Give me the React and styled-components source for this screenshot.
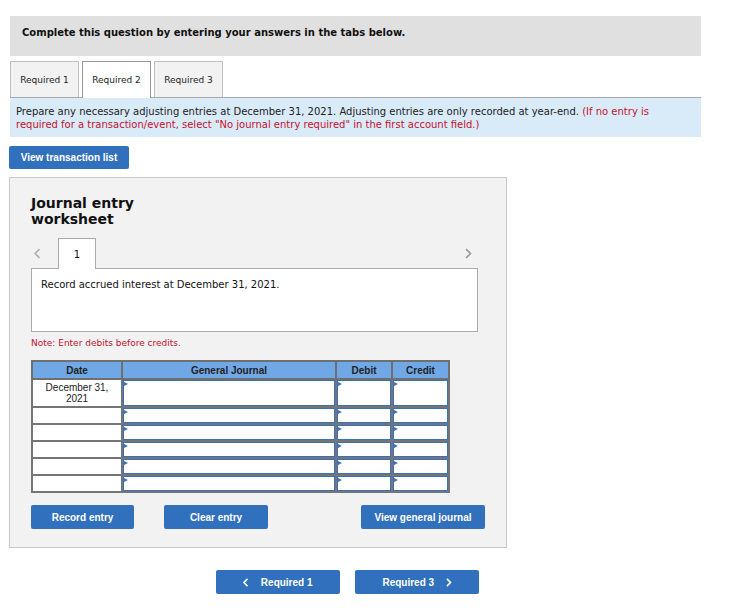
import React from 'react';
import styled, { createGlobalStyle } from 'styled-components';

const GlobalStyle = createGlobalStyle`
body {
  margin: 0;
  background: #ffffff;
  font-family: "DejaVu Sans", Verdana, sans-serif;
  color: #111;
}
`;

const rows = [
    { date: 'December 31,\n2021', tall: true },
    { date: '' },
    { date: '' },
    { date: '' },
    { date: '' },
    { date: '' },
];

const Chevron = ({ dir = 'left', color = '#aaa', size = 10, width = 1.5 }) => (
    <svg width={size * 0.6} height={size} viewBox="0 0 6 10" fill="none">
        {dir === 'left'
            ? <polyline points="5,1 1,5 5,9" stroke={color} strokeWidth={width} fill="none"/>
            : <polyline points="1,1 5,5 1,9" stroke={color} strokeWidth={width} fill="none"/>}
    </svg>
);

const Page = styled.div`
width: 691px;
padding: 16px 0 0 10px;
`;

const Header = styled.div`
height: 40px;
box-sizing: border-box;
background: #e0e0e0;
padding: 11px 0 0 12px;
font-size: 10px;
line-height: 12px;
font-weight: bold;
color: #111;
`;

const TabRow = styled.div`
display: flex;
gap: 3px;
margin-top: 5px;
position: relative;
z-index: 1;
`;

const Tab = styled.div`
width: 67px;
height: ${p => p.$active ? 36 : 35}px;
margin-bottom: ${p => p.$active ? -1 : 0}px;
border: 1px solid ${p => p.$active ? '#999' : '#c0c0c0'};
border-bottom: none;
background: ${p => p.$active ? '#ffffff' : '#f2f2f2'};
display: flex;
align-items: center;
justify-content: center;
font-size: 9px;
color: #222;
`;

const Instructions = styled.div`
background: #d9ebf9;
border-top: 1px solid #a8a8a8;
padding: 7px 38px 6px 6px;
font-size: 10px;
line-height: 13px;
color: #222;
`;

const Lead = styled.span`
color: #222;
`;

const Red = styled.span`
color: #c8102e;
`;

const Button = styled.button`
width: ${p => p.$w}px;
height: 24px;
background: #3170bc;
border: none;
border-radius: 2px;
color: #fff;
font-family: "Liberation Sans", Arial, sans-serif;
font-weight: bold;
font-size: 10px;
display: flex;
align-items: center;
justify-content: center;
gap: 12px;
padding: 0;
cursor: pointer;
`;

const TransactionButton = styled(Button)`
margin: 9px 0 0 -1px;
height: 23px;
`;

const Panel = styled.div`
width: 454px;
margin: 8px 0 0 -1px;
padding: 17px 21px 18px 21px;
border: 1px solid #c8c8c8;
background: #f2f2f2;
`;

const Title = styled.div`
font-size: 14px;
font-weight: bold;
line-height: 16px;
color: #111;
`;

const EntryNav = styled.div`
display: flex;
align-items: flex-end;
margin-top: 10px;
width: 447px;
height: 31px;
position: relative;
z-index: 1;
`;

const NavArrow = styled.div`
width: 27px;
height: 30px;
display: flex;
align-items: center;
padding-left: ${p => p.$pad}px;
box-sizing: border-box;
`;

const EntryTab = styled.div`
width: 36px;
height: 30px;
margin-bottom: -1px;
border: 1px solid #aaa;
border-bottom: none;
background: #fff;
display: flex;
align-items: center;
justify-content: center;
font-size: 10px;
color: #111;
`;

const Spacer = styled.div`
flex: 1;
`;

const RecordBox = styled.div`
width: 427px;
height: 42px;
border: 1px solid #aaa;
background: #fff;
padding: 10px 9px;
font-size: 10px;
color: #111;
`;

const Note = styled.div`
margin-top: 6px;
font-size: 9px;
color: #c8102e;
`;

const Table = styled.table`
margin-top: 12px;
border-collapse: collapse;
font-family: "Liberation Sans", Arial, sans-serif;
font-size: 10px;
background: #fff;
`;

const Th = styled.th`
width: ${p => p.$w}px;
height: 16px;
padding: 0;
background: #70a8e6;
border: 2px solid #6f6f6f;
font-weight: bold;
color: #222;
`;

const Td = styled.td`
height: ${p => p.$tall ? 26 : 15}px;
padding: 0;
border: 2px solid #757575;
vertical-align: top;
text-align: center;
white-space: pre-line;
line-height: 11px;
color: #222;
`;

const DateText = styled.div`
padding-top: 2px;
`;

const InputCell = styled.div`
height: ${p => p.$tall ? 24 : 13}px;
border: 1px solid #3b70bb;
position: relative;
&::before {
  content: '';
  position: absolute;
  left: 0;
  top: 1px;
  border-left: 4px solid #3b70bb;
  border-top: 2.5px solid transparent;
  border-bottom: 2.5px solid transparent;
}
`;

const ActionRow = styled.div`
display: flex;
margin-top: 12px;
gap: 30px;
`;

const BottomNav = styled.div`
display: flex;
gap: 15px;
margin: 22px 0 0 206px;
`;

const App = () => (
    <Page>
        <GlobalStyle/>
        <Header>Complete this question by entering your answers in the tabs below.</Header>
        <TabRow>
            <Tab>Required 1</Tab>
            <Tab $active>Required 2</Tab>
            <Tab>Required 3</Tab>
        </TabRow>
        <Instructions>
            <Lead>Prepare any necessary adjusting entries at December 31, 2021. Adjusting entries are only recorded at year-end.</Lead>{' '}
            <Red>(If no entry is required for a transaction/event, select "No journal entry required" in the first account field.)</Red>
        </Instructions>
        <TransactionButton $w={120}>View transaction list</TransactionButton>
        <Panel>
            <Title>Journal entry<br/>worksheet</Title>
            <EntryNav>
                <NavArrow $pad={3}><Chevron dir="left" color="#b0b0b0" size={11}/></NavArrow>
                <EntryTab>1</EntryTab>
                <Spacer/>
                <NavArrow $pad={14}><Chevron dir="right" color="#999" size={11}/></NavArrow>
            </EntryNav>
            <RecordBox>Record accrued interest at December 31, 2021.</RecordBox>
            <Note>Note: Enter debits before credits.</Note>
            <Table>
                <thead>
                    <tr>
                        <Th $w={88}>Date</Th>
                        <Th $w={212}>General Journal</Th>
                        <Th $w={54}>Debit</Th>
                        <Th $w={55}>Credit</Th>
                    </tr>
                </thead>
                <tbody>
                    {rows.map((r, i) => (
                        <tr key={i}>
                            <Td $tall={r.tall}><DateText>{r.date}</DateText></Td>
                            <Td $tall={r.tall}><InputCell $tall={r.tall}/></Td>
                            <Td $tall={r.tall}><InputCell $tall={r.tall}/></Td>
                            <Td $tall={r.tall}><InputCell $tall={r.tall}/></Td>
                        </tr>
                    ))}
                </tbody>
            </Table>
            <ActionRow>
                <Button $w={103}>Record entry</Button>
                <Button $w={104}>Clear entry</Button>
                <Spacer/>
                <Button $w={124}>View general journal</Button>
            </ActionRow>
        </Panel>
        <BottomNav>
            <Button $w={124}><Chevron dir="left" color="#fff" size={9} width={1.8}/>Required 1</Button>
            <Button $w={124}>Required 3<Chevron dir="right" color="#fff" size={9} width={1.8}/></Button>
        </BottomNav>
    </Page>
);

export default App;
